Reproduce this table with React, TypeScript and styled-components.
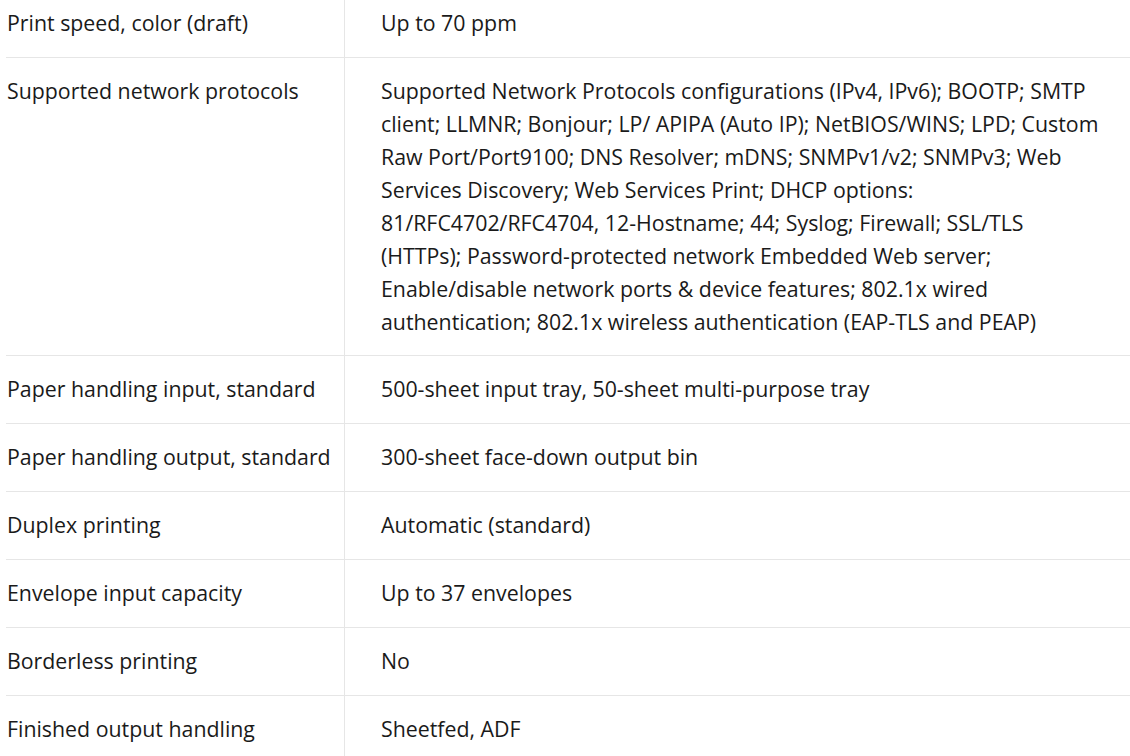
import React from "react";
import styled, { createGlobalStyle } from "styled-components";

const GlobalStyle = createGlobalStyle`
  html, body { margin: 0; padding: 0; background: #ffffff; }
  body { font-family: "Open Sans", "Noto Sans", sans-serif; color: #1a1a1a; overflow: hidden; }
`;

const SpecTable = styled.table`
  margin: -10px 0 0 6px;
  width: 1124px;
  table-layout: fixed;
  border-collapse: collapse;
  font-size: 21.34px;
  line-height: 32.94px;
`;

const Row = styled.tr`
  border-bottom: 1px solid #e6e6e6;
`;

const Label = styled.th`
  width: 337px;
  padding: 17px 0 17px 1px;
  text-align: left;
  font-weight: 400;
  vertical-align: top;
`;

const Value = styled.td`
  padding: 17px 27px 17px 36px;
  border-left: 1px solid #e6e6e6;
  vertical-align: top;
`;

const specs: [string, string][] = [
  ["Print speed, color (draft)", "Up to 70 ppm"],
  [
    "Supported network protocols",
    "Supported Network Protocols configurations (IPv4, IPv6); BOOTP; SMTP client; LLMNR; Bonjour; LP/ APIPA (Auto IP); NetBIOS/WINS; LPD; Custom Raw Port/Port9100; DNS Resolver; mDNS; SNMPv1/v2; SNMPv3; Web Services Discovery; Web Services Print; DHCP options: 81/RFC4702/RFC4704, 12-Hostname; 44; Syslog; Firewall; SSL/TLS (HTTPs); Password-protected network Embedded Web server; Enable/disable network ports & device features; 802.1x wired authentication; 802.1x wireless authentication (EAP-TLS and PEAP)",
  ],
  ["Paper handling input, standard", "500-sheet input tray, 50-sheet multi-purpose tray"],
  ["Paper handling output, standard", "300-sheet face-down output bin"],
  ["Duplex printing", "Automatic (standard)"],
  ["Envelope input capacity", "Up to 37 envelopes"],
  ["Borderless printing", "No"],
  ["Finished output handling", "Sheetfed, ADF"],
];

export default function App() {
  return (
    <>
      <GlobalStyle />
      <SpecTable>
        <tbody>
          {specs.map(([label, value]) => (
            <Row key={label}>
              <Label scope="row">{label}</Label>
              <Value>{value}</Value>
            </Row>
          ))}
        </tbody>
      </SpecTable>
    </>
  );
}
